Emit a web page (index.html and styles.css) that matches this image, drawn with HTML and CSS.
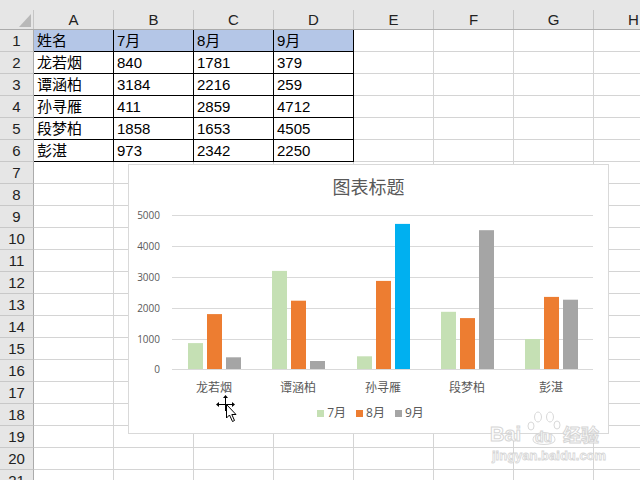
FILE: index.html
```html
<!DOCTYPE html>
<html lang="zh-CN">
<head>
<meta charset="utf-8">
<title>图表标题</title>
<link rel="stylesheet" href="styles.css">
</head>
<body>
<div class="sheet">
  <div class="grid">
    <div class="corner"><span class="corner-in"><svg class="tri" width="12" height="13" viewBox="0 0 12 13"><polygon points="12,0 12,13 0,13" fill="#b8b8b8"/></svg></span></div>
    <div class="ch"><span>A</span></div><div class="ch"><span>B</span></div><div class="ch"><span>C</span></div><div class="ch"><span>D</span></div><div class="ch"><span>E</span></div><div class="ch"><span>F</span></div><div class="ch"><span>G</span></div><div class="ch"><span>H</span></div>

    <div class="rh">1</div><div class="c d hd">姓名</div><div class="c d hd">7月</div><div class="c d hd">8月</div><div class="c d hd">9月</div><div class="c"></div><div class="c"></div><div class="c"></div><div class="c"></div>
    <div class="rh">2</div><div class="c d">龙若烟</div><div class="c d">840</div><div class="c d">1781</div><div class="c d">379</div><div class="c"></div><div class="c"></div><div class="c"></div><div class="c"></div>
    <div class="rh">3</div><div class="c d">谭涵柏</div><div class="c d">3184</div><div class="c d">2216</div><div class="c d">259</div><div class="c"></div><div class="c"></div><div class="c"></div><div class="c"></div>
    <div class="rh">4</div><div class="c d">孙寻雁</div><div class="c d">411</div><div class="c d">2859</div><div class="c d">4712</div><div class="c"></div><div class="c"></div><div class="c"></div><div class="c"></div>
    <div class="rh">5</div><div class="c d">段梦柏</div><div class="c d">1858</div><div class="c d">1653</div><div class="c d">4505</div><div class="c"></div><div class="c"></div><div class="c"></div><div class="c"></div>
    <div class="rh">6</div><div class="c d">彭湛</div><div class="c d">973</div><div class="c d">2342</div><div class="c d">2250</div><div class="c"></div><div class="c"></div><div class="c"></div><div class="c"></div>
    <div class="rh">7</div><div class="c"></div><div class="c"></div><div class="c"></div><div class="c"></div><div class="c"></div><div class="c"></div><div class="c"></div><div class="c"></div>
    <div class="rh">8</div><div class="c"></div><div class="c"></div><div class="c"></div><div class="c"></div><div class="c"></div><div class="c"></div><div class="c"></div><div class="c"></div>
    <div class="rh">9</div><div class="c"></div><div class="c"></div><div class="c"></div><div class="c"></div><div class="c"></div><div class="c"></div><div class="c"></div><div class="c"></div>
    <div class="rh">10</div><div class="c"></div><div class="c"></div><div class="c"></div><div class="c"></div><div class="c"></div><div class="c"></div><div class="c"></div><div class="c"></div>
    <div class="rh">11</div><div class="c"></div><div class="c"></div><div class="c"></div><div class="c"></div><div class="c"></div><div class="c"></div><div class="c"></div><div class="c"></div>
    <div class="rh">12</div><div class="c"></div><div class="c"></div><div class="c"></div><div class="c"></div><div class="c"></div><div class="c"></div><div class="c"></div><div class="c"></div>
    <div class="rh">13</div><div class="c"></div><div class="c"></div><div class="c"></div><div class="c"></div><div class="c"></div><div class="c"></div><div class="c"></div><div class="c"></div>
    <div class="rh">14</div><div class="c"></div><div class="c"></div><div class="c"></div><div class="c"></div><div class="c"></div><div class="c"></div><div class="c"></div><div class="c"></div>
    <div class="rh">15</div><div class="c"></div><div class="c"></div><div class="c"></div><div class="c"></div><div class="c"></div><div class="c"></div><div class="c"></div><div class="c"></div>
    <div class="rh">16</div><div class="c"></div><div class="c"></div><div class="c"></div><div class="c"></div><div class="c"></div><div class="c"></div><div class="c"></div><div class="c"></div>
    <div class="rh">17</div><div class="c"></div><div class="c"></div><div class="c"></div><div class="c"></div><div class="c"></div><div class="c"></div><div class="c"></div><div class="c"></div>
    <div class="rh">18</div><div class="c"></div><div class="c"></div><div class="c"></div><div class="c"></div><div class="c"></div><div class="c"></div><div class="c"></div><div class="c"></div>
    <div class="rh">19</div><div class="c"></div><div class="c"></div><div class="c"></div><div class="c"></div><div class="c"></div><div class="c"></div><div class="c"></div><div class="c"></div>
    <div class="rh">20</div><div class="c"></div><div class="c"></div><div class="c"></div><div class="c"></div><div class="c"></div><div class="c"></div><div class="c"></div><div class="c"></div>
    <div class="rh">21</div><div class="c"></div><div class="c"></div><div class="c"></div><div class="c"></div><div class="c"></div><div class="c"></div><div class="c"></div><div class="c"></div>
  </div>

  <div class="chart">
    <div class="chart-title">图表标题</div>
    <svg class="plot" width="479" height="204" viewBox="0 0 479 204">
      <g stroke="#d9d9d9" stroke-width="1">
        <line x1="43" y1="17.5" x2="464" y2="17.5"/>
        <line x1="43" y1="48.5" x2="464" y2="48.5"/>
        <line x1="43" y1="79.5" x2="464" y2="79.5"/>
        <line x1="43" y1="110.5" x2="464" y2="110.5"/>
        <line x1="43" y1="141.5" x2="464" y2="141.5"/>
      </g>
      <g class="axis">
        <text x="31" y="21">5000</text>
        <text x="31" y="52">4000</text>
        <text x="31" y="83">3000</text>
        <text x="31" y="114">2000</text>
        <text x="31" y="145">1000</text>
        <text x="31" y="175">0</text>
      </g>
      <g>
        <rect x="59" y="145.1" width="15" height="25.9" fill="#c5e0b4"/>
        <rect x="78" y="116.1" width="15" height="54.9" fill="#ed7d31"/>
        <rect x="97" y="159.3" width="15" height="11.7" fill="#a5a5a5"/>

        <rect x="143" y="72.9" width="15" height="98.1" fill="#c5e0b4"/>
        <rect x="162" y="102.7" width="15" height="68.3" fill="#ed7d31"/>
        <rect x="181" y="163" width="15" height="8" fill="#a5a5a5"/>

        <rect x="228" y="158.3" width="15" height="12.7" fill="#c5e0b4"/>
        <rect x="247" y="82.9" width="15" height="88.1" fill="#ed7d31"/>
        <rect x="266" y="25.9" width="15" height="145.1" fill="#00b0f0"/>

        <rect x="312" y="113.8" width="15" height="57.2" fill="#c5e0b4"/>
        <rect x="331" y="120.1" width="15" height="50.9" fill="#ed7d31"/>
        <rect x="350" y="32.2" width="15" height="138.8" fill="#a5a5a5"/>

        <rect x="396" y="141" width="15" height="30" fill="#c5e0b4"/>
        <rect x="415" y="98.9" width="15" height="72.1" fill="#ed7d31"/>
        <rect x="434" y="101.7" width="15" height="69.3" fill="#a5a5a5"/>
      </g>
      <line x1="43" y1="171.5" x2="464" y2="171.5" stroke="#d9d9d9" stroke-width="1"/>
      <g class="cat">
        <text x="85" y="193.5">龙若烟</text>
        <text x="169" y="193.5">谭涵柏</text>
        <text x="254" y="193.5">孙寻雁</text>
        <text x="338" y="193.5">段梦柏</text>
        <text x="422" y="193.5">彭湛</text>
      </g>
    </svg>
    <div class="legend">
      <span class="item"><i class="sw sw-7"></i>7月</span>
      <span class="item"><i class="sw sw-8"></i>8月</span>
      <span class="item"><i class="sw sw-9"></i>9月</span>
    </div>
  </div>

  <svg class="cursor" width="26" height="32" viewBox="0 0 26 32">
    <g stroke="#000" stroke-width="1" fill="#000">
      <line x1="10.5" y1="3" x2="10.5" y2="17"/>
      <line x1="3" y1="10.5" x2="18" y2="10.5"/>
      <polygon points="10.5,1 8,4 13,4" stroke="none"/>
      <polygon points="1,10.5 4,8 4,13" stroke="none"/>
      <polygon points="20,10.5 17,8 17,13" stroke="none"/>
    </g>
    <polygon points="11.5,10.5 11.5,24 14.5,21 17.5,27.5 19.5,26.5 16.8,20.5 21,20.5" fill="#fff" stroke="#000" stroke-width="1"/>
  </svg>

  <div class="watermark">
    <svg class="wm-logo" width="116" height="38" viewBox="0 0 116 38">
      <g fill="#fff" stroke="#d6d6d6" stroke-width="1">
        <ellipse cx="41" cy="16" rx="3" ry="4"/>
        <ellipse cx="48" cy="7" rx="3.5" ry="5"/>
        <ellipse cx="60" cy="7" rx="3.5" ry="5"/>
        <ellipse cx="67" cy="15" rx="3" ry="4"/>
        <path d="M43 30 C43 20 65 20 65 30 C65 36 43 36 43 30 Z"/>
      </g>
      <text x="0" y="31" class="wm-bai">Bai</text>
      <text x="45" y="32" class="wm-du">du</text>
      <text x="73" y="32" class="wm-jy">经验</text>
    </svg>
    <div class="wm-url">jingyan.baidu.com</div>
  </div>
</div>
</body>
</html>
```

FILE: styles.css
```css
* { box-sizing: border-box; }
html, body { margin: 0; padding: 0; background: #fff; }
.sheet {
  position: relative;
  width: 640px;
  height: 480px;
  overflow: hidden;
  font-family: "Liberation Sans", "Noto Sans CJK SC", sans-serif;
  font-size: 15px;
  color: #000;
}
.grid {
  display: grid;
  grid-template-columns: 34px repeat(8, 80px);
  grid-template-rows: 30px repeat(21, 22px);
  width: 674px;
}
.corner {
  background: #e6e6e6;
  border-bottom: 1px solid #ababab;
  padding-top: 10px;
}
.corner-in {
  display: flex;
  justify-content: flex-end;
  align-items: flex-end;
  height: 100%;
  border-right: 1px solid #c6c6c6;
  padding: 0 2px 2px 0;
}
.tri { display: block; }
.ch {
  background: #e6e6e6;
  border-bottom: 1px solid #ababab;
  padding-top: 10px;
}
.ch span {
  display: block;
  height: 100%;
  border-right: 1px solid #c6c6c6;
  text-align: center;
  line-height: 19px;
  color: #222;
}
.rh {
  background: #e6e6e6;
  border-right: 1px solid #ababab;
  border-bottom: 1px solid #c8c8c8;
  text-align: center;
  line-height: 21px;
  color: #222;
}
.c {
  border-right: 1px solid #d4d4d4;
  border-bottom: 1px solid #d4d4d4;
  line-height: 21px;
  padding-left: 3px;
  white-space: nowrap;
  overflow: hidden;
}
.c.d { border-right-color: #000; border-bottom-color: #000; }
.c.hd { background: #b4c6e7; }

.chart {
  position: absolute;
  left: 128px;
  top: 164px;
  width: 481px;
  height: 270px;
  background: #fff;
  border: 1px solid #d9d9d9;
  display: flex;
  flex-direction: column;
}
.chart-title {
  margin-top: 9px;
  height: 24px;
  line-height: 24px;
  text-align: center;
  font-family: "Noto Sans CJK SC", sans-serif;
  font-size: 18px;
  color: #595959;
}
.plot { display: block; }
.axis text {
  font-family: "Open Sans", "Liberation Sans", sans-serif;
  font-size: 10px;
  fill: #595959;
  text-anchor: end;
}
.cat text {
  font-family: "Noto Sans CJK SC", sans-serif;
  font-size: 12px;
  fill: #595959;
  text-anchor: middle;
}
.legend {
  margin-top: 2px;
  display: flex;
  justify-content: center;
  gap: 10px;
  height: 18px;
  line-height: 18px;
  font-family: "Open Sans", "Noto Sans CJK SC", sans-serif;
  font-size: 12px;
  color: #595959;
  padding-left: 4px;
}
.item { display: flex; align-items: center; gap: 3px; }
.sw { display: block; width: 7px; height: 7px; }
.sw-7 { background: #c5e0b4; }
.sw-8 { background: #ed7d31; }
.sw-9 { background: #a5a5a5; }

.cursor {
  position: absolute;
  left: 215px;
  top: 394px;
}
.watermark {
  position: absolute;
  left: 490px;
  top: 410px;
  width: 120px;
  opacity: 0.9;
}
.wm-logo { display: block; }
.wm-bai {
  font-family: "Liberation Sans", sans-serif;
  font-weight: bold;
  font-size: 20px;
  fill: #fff;
  stroke: #d2d2d2;
  stroke-width: 1;
}
.wm-du {
  font-family: "Liberation Sans", sans-serif;
  font-weight: bold;
  font-size: 14px;
  fill: #fff;
  stroke: #d2d2d2;
  stroke-width: 1;
}
.wm-jy {
  font-family: "Noto Sans CJK SC", sans-serif;
  font-weight: bold;
  font-size: 18px;
  fill: #fff;
  stroke: #d2d2d2;
  stroke-width: 1;
}
.wm-url {
  margin-top: 0;
  font-family: "Liberation Sans", sans-serif;
  font-weight: bold;
  font-size: 13px;
  line-height: 16px;
  color: #fff;
  -webkit-text-stroke: 0.8px #d2d2d2;
  padding-left: 2px;
}
```
